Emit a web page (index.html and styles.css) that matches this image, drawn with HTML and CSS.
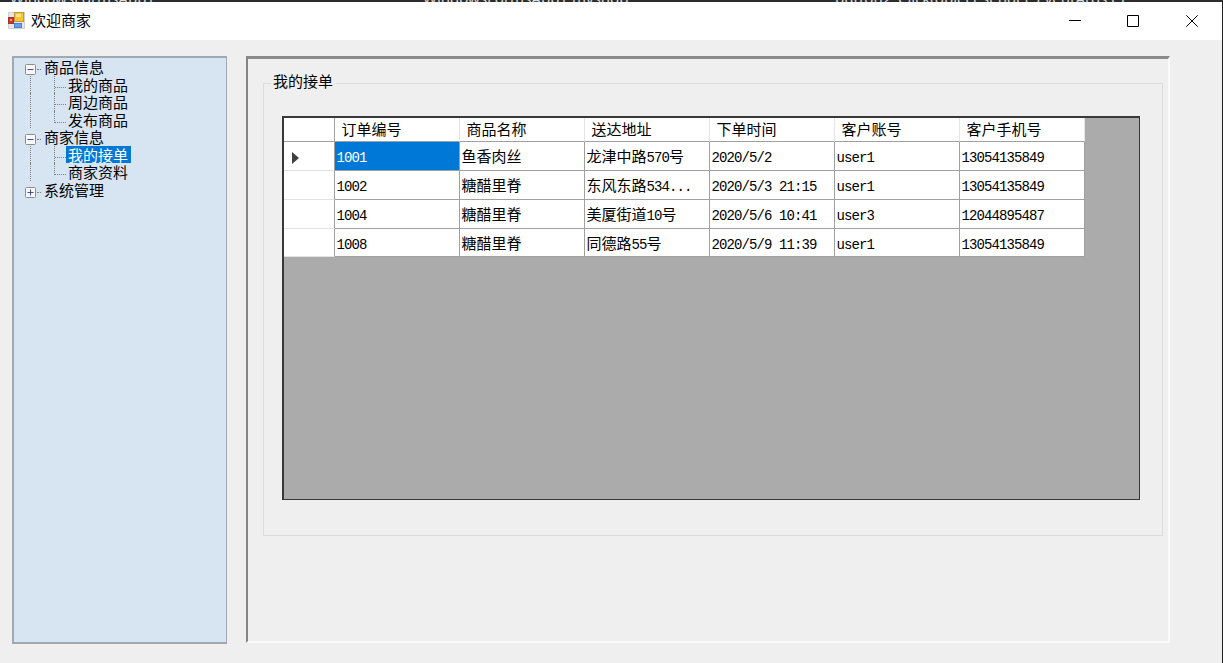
FILE: index.html
```html
<!DOCTYPE html>
<html lang="zh-CN">
  <head>
    <meta charset="UTF-8" />
    <meta name="viewport" content="width=device-width, initial-scale=1.0" />
    <title>欢迎商家</title>
    <link rel="stylesheet" href="styles.css">
  </head>
  <body>
    <div class="backdrop">
      <span class="backdrop-item first">WindowsFormsApp1</span>
      <span class="backdrop-item second">WindowsFormsApp1.myshop</span>
      <span class="backdrop-item third">button2_Click(object sender, EventArgs e)</span>
    </div>

    <div class="window">
      <header class="titlebar">
        <svg class="app-icon" width="18" height="18" viewBox="0 0 18 18">
          <rect x="0.5" y="0.5" width="16" height="16" fill="#e6e6e6" stroke="#cfcfcf" />
          <rect x="6.5" y="0.5" width="9" height="9" fill="#f6c52c" stroke="#c29a3c" />
          <rect x="8" y="2" width="5" height="3" fill="#ffe48a" />
          <rect x="0.5" y="5.5" width="5" height="6" fill="#c8372b" stroke="#a5352c" />
          <rect x="2" y="7" width="2" height="2" fill="#ec9a8e" />
          <rect x="6.5" y="11.5" width="7" height="4" fill="#6b9fea" stroke="#4a80d4" />
        </svg>
        <h1 class="title">欢迎商家</h1>
        <div class="controls">
          <svg width="12" height="12" viewBox="0 0 12 12"><path d="M0 5.5H12" /></svg>
          <svg width="12" height="12" viewBox="0 0 12 12"><path d="M0.5 0.5H11.5V11.5H0.5Z" /></svg>
          <svg width="12" height="12" viewBox="0 0 12 12"><path d="M0.3 0.3L11.7 11.7M11.7 0.3L0.3 11.7" /></svg>
        </div>
      </header>

      <main class="content">
        <nav class="tree">
          <div class="node root">
            <svg class="toggle" width="11" height="11" viewBox="0 0 11 11"><rect x="0.5" y="0.5" width="10" height="10" rx="1" /><path d="M2.5 5.5H8.5" /></svg>
            <span class="dash"></span><span class="label">商品信息</span>
          </div>
          <div class="node"><span class="guide"></span><span class="elbow"></span><span class="label">我的商品</span></div>
          <div class="node"><span class="guide"></span><span class="elbow"></span><span class="label">周边商品</span></div>
          <div class="node"><span class="guide"></span><span class="elbow last"></span><span class="label">发布商品</span></div>
          <div class="node root">
            <svg class="toggle" width="11" height="11" viewBox="0 0 11 11"><rect x="0.5" y="0.5" width="10" height="10" rx="1" /><path d="M2.5 5.5H8.5" /></svg>
            <span class="dash"></span><span class="label">商家信息</span>
          </div>
          <div class="node"><span class="guide"></span><span class="elbow"></span><span class="label selected">我的接单</span></div>
          <div class="node"><span class="guide"></span><span class="elbow last"></span><span class="label">商家资料</span></div>
          <div class="node root">
            <svg class="toggle" width="11" height="11" viewBox="0 0 11 11"><rect x="0.5" y="0.5" width="10" height="10" rx="1" /><path d="M2.5 5.5H8.5M5.5 2.5V8.5" /></svg>
            <span class="dash"></span><span class="label">系统管理</span>
          </div>
        </nav>

        <section class="panel">
          <fieldset class="group">
            <legend>我的接单</legend>
            <div class="datagrid">
              <div class="row head">
                <div class="cell"></div>
                <div class="cell">订单编号</div>
                <div class="cell">商品名称</div>
                <div class="cell">送达地址</div>
                <div class="cell">下单时间</div>
                <div class="cell">客户账号</div>
                <div class="cell">客户手机号</div>
              </div>
              <div class="row">
                <div class="cell"><svg class="marker" width="7" height="12" viewBox="0 0 7 12"><path d="M0 0L7 6L0 12Z" /></svg></div>
                <div class="cell active"><span class="num">1001</span></div>
                <div class="cell">鱼香肉丝</div>
                <div class="cell">龙津中路<span class="num">570</span>号</div>
                <div class="cell"><span class="num">2020/5/2</span></div>
                <div class="cell"><span class="num">user1</span></div>
                <div class="cell"><span class="num">13054135849</span></div>
              </div>
              <div class="row">
                <div class="cell"></div>
                <div class="cell"><span class="num">1002</span></div>
                <div class="cell">糖醋里脊</div>
                <div class="cell">东风东路<span class="num">534...</span></div>
                <div class="cell"><span class="num">2020/5/3 21:15</span></div>
                <div class="cell"><span class="num">user1</span></div>
                <div class="cell"><span class="num">13054135849</span></div>
              </div>
              <div class="row">
                <div class="cell"></div>
                <div class="cell"><span class="num">1004</span></div>
                <div class="cell">糖醋里脊</div>
                <div class="cell">美厦街道<span class="num">10</span>号</div>
                <div class="cell"><span class="num">2020/5/6 10:41</span></div>
                <div class="cell"><span class="num">user3</span></div>
                <div class="cell"><span class="num">12044895487</span></div>
              </div>
              <div class="row">
                <div class="cell"></div>
                <div class="cell"><span class="num">1008</span></div>
                <div class="cell">糖醋里脊</div>
                <div class="cell">同德路<span class="num">55</span>号</div>
                <div class="cell"><span class="num">2020/5/9 11:39</span></div>
                <div class="cell"><span class="num">user1</span></div>
                <div class="cell"><span class="num">13054135849</span></div>
              </div>
            </div>
          </fieldset>
        </section>
      </main>
    </div>
  </body>
</html>
```

FILE: styles.css
```css
* {
  box-sizing: border-box;
}
body {
  margin: 0;
  height: 663px;
  overflow: hidden;
  display: flex;
  flex-direction: column;
  font-family: "Noto Sans CJK SC", sans-serif;
  font-size: 15px;
  color: #000;
  background-color: #efefef;
}

/* sliver of the editor behind the window */
.backdrop {
  display: flex;
  align-items: flex-end;
  height: 2px;
  overflow: hidden;
  background-color: #2d2d30;
  color: #dcdcdc;
  font-family: "Noto Sans", sans-serif;
  font-size: 15px;
  line-height: 8px;
  white-space: nowrap;
}
.backdrop-item {
  flex: none;
}
.first {
  width: 413px;
  padding-left: 10px;
}
.second {
  width: 422px;
  padding-left: 10px;
}

.window {
  flex: 1;
  display: flex;
  flex-direction: column;
  border-right: 1px solid #1e1e1e;
}
.titlebar {
  display: flex;
  align-items: center;
  height: 38px;
  padding: 0 24px 2px 8px;
  background-color: #fff;
}
.app-icon {
  margin-top: 1px;
}
.title {
  margin: 0 0 0 5px;
  font-size: 15px;
  font-weight: normal;
  line-height: 20px;
}
.controls {
  display: flex;
  gap: 46px;
  margin-left: auto;
  padding-top: 2px;
}
.controls svg {
  fill: none;
  stroke: #000;
}
.controls svg:last-child {
  margin-left: 1px;
}
.content {
  flex: 1;
  display: flex;
  gap: 19px;
  padding: 16px 52px 19px 12px;
}

.tree {
  width: 215px;
  height: 588px;
  border: 2px solid #a0a8b4;
  border-right-width: 1px;
  background-color: #d7e4f2;
}
.node {
  display: flex;
  height: 17.5px;
  padding-left: 16px;
}
.root {
  padding-left: 11px;
}
.toggle {
  flex: none;
  margin-top: 6px;
  fill: #f8f8f8;
  stroke: #8c8c8c;
}
.toggle path {
  stroke: #3c55a0;
}
.dash {
  width: 4px;
  height: 12px;
  margin: 0 1px;
  border-bottom: 1px dotted #808080;
}
.guide {
  width: 24px;
  border-left: 1px dotted #808080;
}
.elbow {
  width: 12px;
  border-left: 1px dotted #808080;
}
.elbow::before {
  content: "";
  display: block;
  width: 11px;
  height: 11px;
  border-bottom: 1px dotted #808080;
}
.last {
  border-left: none;
}
.last::before {
  border-left: 1px dotted #808080;
}
.label {
  padding: 0 3px 0 2px;
  line-height: 17px;
}
.selected {
  background-color: #0078d7;
  color: #fff;
}

.panel {
  width: 924px;
  height: 587px;
  padding: 11px 5px 0 15px;
  border: 2px solid #fafafa;
  border-top: 3px solid #8a8a8a;
  border-left: 2px solid #858585;
}
.group {
  height: 466px;
  margin: 0;
  padding: 20px 0 0 18px;
  border: 1px solid #dcdcdc;
}
legend {
  margin-left: -11px;
  padding: 0 2px 4px;
  line-height: 22px;
}
.datagrid {
  width: 858px;
  height: 384px;
  border: 2px solid #383838;
  border-right-width: 1px;
  border-bottom-width: 1px;
  background-color: #ababab;
}
.row {
  display: grid;
  grid-template-columns: 51px repeat(6, 125px);
  width: 801px;
  height: 29px;
}
.row:last-child {
  height: 28px;
}
.cell {
  padding-left: 1.5px;
  border-right: 1px solid #a0a0a0;
  border-bottom: 1px solid #a0a0a0;
  background-color: #fff;
  line-height: 27px;
  white-space: nowrap;
  overflow: hidden;
}
.cell:first-child {
  border-bottom-color: #e2e2e2;
}
.head {
  height: 24px;
}
.head .cell {
  padding-left: 6.5px;
  border-right-color: #e5e5e5;
  line-height: 22px;
}
.head .cell:first-child {
  border-color: #a0a0a0;
}
.active {
  background-color: #0078d7;
  color: #fff;
}
.num {
  font-family: "Liberation Mono", monospace;
  font-size: 14px;
  letter-spacing: -0.9px;
}
.marker {
  display: block;
  margin: 10px 0 0 6px;
  fill: #404040;
}
```
